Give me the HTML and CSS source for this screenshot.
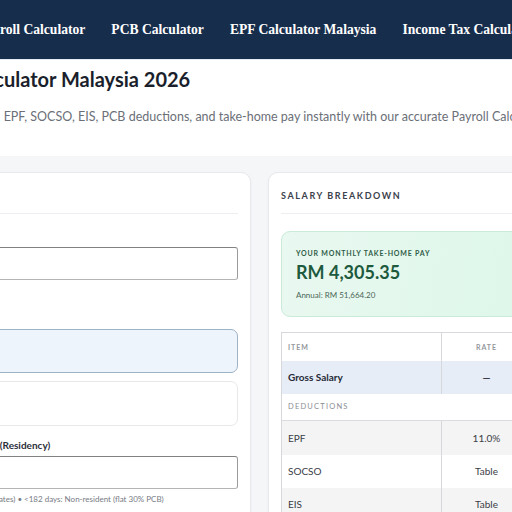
FILE: index.html
```html
<!DOCTYPE html>
<html lang="en">
<head>
<meta charset="utf-8">
<title>Payroll Calculator Malaysia 2026</title>
<link rel="stylesheet" href="styles.css">
</head>
<body>
<div class="viewport">
  <nav class="topnav">
    <div class="navlinks">
      <a href="#">Payroll Calculator</a>
      <a href="#">PCB Calculator</a>
      <a href="#">EPF Calculator Malaysia</a>
      <a href="#">Income Tax Calculator</a>
    </div>
  </nav>

  <header class="hero">
    <h1>Payroll Calculator Malaysia 2026</h1>
    <p>Calculate your salary, EPF, SOCSO, EIS, PCB deductions, and take-home pay instantly with our accurate Payroll Calculator.</p>
  </header>

  <main class="workspace">
    <section class="card form-card">
      <div class="card-head"><h2>Details</h2></div>

      <div class="field first">
        <label>Salary</label>
        <div class="input"><span>5000</span></div>
      </div>

      <div class="field second">
        <label>Age</label>
        <div class="option selected"><span>Yes</span></div>
        <div class="option"><span>No</span></div>
      </div>

      <div class="field third">
        <label>Tax Status (Residency)</label>
        <div class="input"><span>Yes</span></div>
        <p class="hint">(progressive rates) • &lt;182 days: Non-resident (flat 30% PCB)</p>
      </div>
    </section>

    <section class="card result-card">
      <div class="card-head"><h2>Salary Breakdown</h2></div>

      <div class="takehome">
        <div class="th-label">Your Monthly Take-Home Pay</div>
        <div class="th-amount">RM 4,305.35</div>
        <div class="th-annual">Annual: RM 51,664.20</div>
      </div>

      <table class="breakdown">
        <colgroup><col class="c-item"><col class="c-rate"><col class="c-amt"></colgroup>
        <thead>
          <tr><th class="left">Item</th><th>Rate</th><th>Amount</th></tr>
        </thead>
        <tbody>
          <tr class="gross"><td class="left">Gross Salary</td><td>—</td><td>RM 5,000.00</td></tr>
          <tr class="section"><td colspan="3">Deductions</td></tr>
          <tr class="alt"><td class="left">EPF</td><td>11.0%</td><td>RM 550.00</td></tr>
          <tr><td class="left">SOCSO</td><td>Table</td><td>RM 24.75</td></tr>
          <tr class="alt"><td class="left">EIS</td><td>Table</td><td>RM 9.90</td></tr>
        </tbody>
      </table>
    </section>
  </main>
</div>
</body>
</html>
```

FILE: styles.css
```css
* { box-sizing: border-box; }

html, body {
  margin: 0;
  padding: 0;
  background: #f4f6f8;
}

body {
  font-family: "Lato", "Noto Sans", sans-serif;
  color: #1d2230;
}

.viewport {
  width: 512px;
  height: 512px;
  overflow: hidden;
}

/* top navigation */
.topnav {
  height: 60px;
  background: #172d4c;
  border-bottom: 1px solid #e4ecf5;
  display: flex;
  align-items: center;
}

.navlinks {
  display: flex;
  gap: 26px;
  margin-left: -22px;
  white-space: nowrap;
}

.navlinks a {
  font-family: "Liberation Serif", "Times New Roman", serif;
  font-weight: bold;
  font-size: 13.6px;
  color: #ffffff;
  text-decoration: none;
}

/* intro */
.hero {
  background: #ffffff;
  padding: 6px 0 0;
  height: 96px;
  margin-left: -100px;
  white-space: nowrap;
}

.hero h1 {
  margin: 0;
  font-size: 20px;
  line-height: 26px;
  font-weight: 700;
  color: #1b1f2c;
}

.hero p {
  margin: 17px 0 0 -15px;
  font-size: 12.5px;
  line-height: 16px;
  color: #6b6f78;
}

/* two-column workspace */
.workspace {
  display: grid;
  grid-template-columns: 312px 384px;
  gap: 17px;
  padding-top: 16px;
  margin-left: -61px;
  align-items: start;
}

.card {
  background: #ffffff;
  border: 1px solid #e7e9ed;
  border-radius: 10px;
  box-shadow: 0 1px 3px rgba(20, 30, 50, 0.05);
  padding: 13px 12px 40px;
  height: 400px;
}

.card-head {
  height: 28px;
  border-bottom: 1px solid #eceef1;
}

.card-head h2 {
  margin: 0;
  font-size: 9px;
  line-height: 20px;
  font-weight: 700;
  letter-spacing: 1.6px;
  text-transform: uppercase;
  color: #3b414b;
}

/* form side */
.field label {
  display: block;
  font-size: 10px;
  line-height: 14px;
  font-weight: 700;
  color: #2b2f3a;
  white-space: nowrap;
}

.field.first { margin-top: 13px; }
.field.first label { margin-bottom: 6px; }

.field.second { margin-top: 20px; }
.field.second label { margin-bottom: 15px; }

.field.third { margin-top: 12px; }
.field.third label { margin-bottom: 4px; }

.input {
  height: 33px;
  border: 1px solid #9b9b9b;
  border-top-color: #828282;
  border-bottom-color: #b4b4b4;
  border-radius: 3px;
  background: #ffffff;
  padding: 0 10px;
  display: flex;
  align-items: center;
  font-size: 11px;
  color: #222;
}

.input span,
.option span { white-space: nowrap; }

.option {
  height: 45px;
  border: 1px solid #e6e8ea;
  border-radius: 7px;
  background: #ffffff;
  padding: 0 12px;
  display: flex;
  align-items: center;
  font-size: 10px;
  color: #333;
}

.option + .option { margin-top: 8px; }

.option.selected {
  height: 44px;
  background: #edf4fc;
  border-color: #9fb2c6;
}

.hint {
  margin: 5px 0 0;
  font-size: 8px;
  line-height: 10px;
  color: #777b84;
  white-space: nowrap;
}

/* result side */
.takehome {
  margin-top: 17px;
  height: 86px;
  border: 1px solid #c9ebd8;
  border-radius: 9px;
  background: linear-gradient(100deg, #e9f8f0 0%, #d9f7e8 100%);
  padding: 16px 14px;
}

.th-label {
  font-size: 7px;
  line-height: 10px;
  font-weight: 700;
  letter-spacing: 0.8px;
  text-transform: uppercase;
  color: #2f5d48;
}

.th-amount {
  margin-top: 2px;
  font-size: 18px;
  line-height: 24px;
  font-weight: 700;
  color: #1d5a3e;
}

.th-annual {
  margin-top: 5px;
  font-size: 8px;
  line-height: 12px;
  color: #4b6658;
}

.breakdown {
  margin-top: 15px;
  width: 100%;
  border-collapse: collapse;
  border: 1px solid #d6d8dc;
  font-size: 10px;
  color: #3a3d45;
}

.c-item { width: 160px; }
.c-rate { width: 90px; }

.breakdown th {
  height: 28px;
  font-size: 7px;
  font-weight: 700;
  letter-spacing: 1px;
  text-transform: uppercase;
  color: #94979c;
  text-align: center;
  border-right: 1px solid #d6d8dc;
  background: #ffffff;
}

.breakdown td {
  height: 33px;
  text-align: center;
  border-right: 1px solid #d6d8dc;
  padding: 0 6px;
}

.breakdown .left { text-align: left; padding-left: 6px; }

.breakdown tr.gross td {
  background: #e6edf6;
  font-weight: 700;
  color: #252a36;
}

.breakdown tr.section td {
  height: 27px;
  text-align: left;
  font-size: 7.5px;
  letter-spacing: 1.2px;
  text-transform: uppercase;
  color: #8a8d93;
  border-bottom: 1px solid #d9dbdf;
  background: #ffffff;
}

.breakdown tr.alt td { background: #f4f4f5; height: 34px; }
```
